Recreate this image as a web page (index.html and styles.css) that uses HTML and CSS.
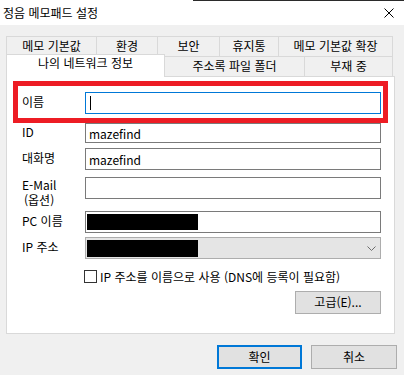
FILE: index.html
```html
<!DOCTYPE html>
<html lang="ko">
<head>
    <meta charset="UTF-8">
    <meta name="viewport" content="width=device-width, initial-scale=1.0">
    <title>정음 메모패드 설정</title>
    <link rel="stylesheet" href="styles.css">
</head>
<body>
    <div class="window">
        <div class="edge"></div>
        <div class="titlebar">
            <span class="title">정음 메모패드 설정</span>
            <svg class="close" width="10" height="10" viewBox="0 0 10 10">
                <path d="M0.5 0.5L9.5 9.5M9.5 0.5L0.5 9.5" stroke="#000" stroke-width="1" fill="none"/>
            </svg>
        </div>

        <div class="tabs">
            <div class="tab-row">
                <div class="tab" style="width: 91px;">메모 기본값</div>
                <div class="tab" style="width: 62px;">환경</div>
                <div class="tab" style="width: 63px;">보안</div>
                <div class="tab" style="width: 60px;">휴지통</div>
                <div class="tab" style="width: 115px;">메모 기본값 확장</div>
            </div>
            <div class="tab-row">
                <div class="tab active" style="width: 159px;">나의 네트워크 정보</div>
                <div class="tab" style="width: 141px;">주소록 파일 폴더</div>
                <div class="tab" style="width: 89px;">부재 중</div>
            </div>
        </div>

        <div class="panel">
            <div class="highlight">
                <div class="row">
                    <span class="label">이름</span>
                    <div class="textbox focused"><span class="caret"></span></div>
                </div>
            </div>

            <div class="row short">
                <span class="label">ID</span>
                <div class="textbox">mazefind</div>
            </div>

            <div class="row gap5">
                <span class="label">대화명</span>
                <div class="textbox">mazefind</div>
            </div>

            <div class="row gap7">
                <div class="label two-lines">
                    <div class="line">E-Mail</div>
                    <div class="line sub">(옵션)</div>
                </div>
                <div class="textbox"></div>
            </div>

            <div class="row gap12">
                <span class="label">PC 이름</span>
                <div class="textbox"><span class="redact"></span></div>
            </div>

            <div class="row gap4">
                <span class="label">IP 주소</span>
                <div class="combo">
                    <span class="redact tall"></span>
                    <svg class="chevron" width="9" height="5" viewBox="0 0 9 5">
                        <path d="M0.5 0.5L4.5 4.5L8.5 0.5" stroke="#6d6d6d" stroke-width="1" fill="none"/>
                    </svg>
                </div>
            </div>

            <div class="check-row">
                <span class="checkbox"></span>
                <span>IP 주소를 이름으로 사용 (DNS에 등록이 필요함)</span>
            </div>

            <div class="advanced-row">
                <div class="button advanced">고급(E)...</div>
            </div>
        </div>

        <div class="buttons">
            <div class="button default">확인</div>
            <div class="button">취소</div>
        </div>
    </div>
</body>
</html>
```

FILE: styles.css
```css
body {
    margin: 0;
    padding: 0;
    background: #f0f0f0;
    font-family: "Noto Sans CJK KR", sans-serif;
    font-size: 12px;
    color: #000;
}

.window {
    width: 404px;
    height: 375px;
    overflow: hidden;
}

.edge {
    height: 1px;
    background: linear-gradient(to right, #ffffff 193px, #2b2b2b 193px);
}

.titlebar {
    height: 24px;
    background: #fff;
    display: flex;
    align-items: center;
    justify-content: space-between;
    padding: 0 10px 0 3px;
}

.title {
    line-height: 16px;
}

/* tabs */
.tabs {
    margin: 11px 0 0 6px;
}

.tab-row {
    display: flex;
    height: 20px;
}

.tab {
    box-sizing: border-box;
    height: 20px;
    border: 1px solid #d9d9d9;
    border-bottom: none;
    margin-left: -1px;
    text-align: center;
    line-height: 17px;
    background: #f0f0f0;
    flex: none;
}

.tab:first-child {
    margin-left: 0;
}

.tab.active {
    position: relative;
    z-index: 1;
    height: 23px;
    margin-top: -2px;
    background: #fff;
    line-height: 16px;
}

/* panel */
.panel {
    margin: 0 9px 0 6px;
    height: 258px;
    box-sizing: border-box;
    border: 1px solid #d9d9d9;
    background: #fff;
    padding: 4px 6px 19px;
}

.highlight {
    border: 5px solid #ed1c24;
    padding: 6px 0 4px;
}

.row {
    display: flex;
    align-items: center;
    height: 22px;
    padding: 0 7px 0 9px;
}

.highlight .row {
    padding: 0 2px 0 4px;
}

.row.short {
    height: 20px;
}

.row.short .textbox {
    height: 20px;
    line-height: 17px;
}

.gap4 { margin-top: 4px; }
.gap5 { margin-top: 5px; }
.gap7 { margin-top: 7px; }
.gap12 { margin-top: 12px; }

.label {
    width: 63px;
    flex: none;
    line-height: 14px;
    margin-top: -2px;
}

.label.two-lines {
    align-self: flex-start;
    margin-top: 0;
}

.label .line {
    height: 15px;
    line-height: 15px;
}

.label .sub {
    padding-left: 2px;
}

.textbox {
    flex: 1;
    height: 22px;
    box-sizing: border-box;
    border: 1px solid #7a7a7a;
    background: #fff;
    padding: 0 3px;
    line-height: 19px;
    display: flex;
    align-items: center;
}

.textbox.focused {
    border-color: #0078d7;
}

.caret {
    width: 1px;
    height: 14px;
    background: #000;
    margin-left: 1px;
}

.redact {
    width: 111px;
    height: 16px;
    background: #000;
    margin-left: -2px;
}

.combo {
    flex: 1;
    height: 22px;
    box-sizing: border-box;
    border: 1px solid #adadad;
    background: #e5e5e5;
    display: flex;
    align-items: center;
    justify-content: space-between;
    padding: 0 4px 0 1px;
}

.redact.tall {
    height: 17px;
    margin-left: 0;
}

.check-row {
    display: flex;
    align-items: center;
    height: 13px;
    margin-top: 11px;
    padding-left: 71px;
    line-height: 14px;
}

.checkbox {
    width: 13px;
    height: 13px;
    box-sizing: border-box;
    border: 1px solid #333;
    background: #fff;
    margin-right: 3px;
    flex: none;
}

.advanced-row {
    display: flex;
    justify-content: flex-end;
    margin-top: 8px;
    padding-right: 7px;
}

.button {
    box-sizing: border-box;
    width: 86px;
    height: 24px;
    border: 1px solid #adadad;
    background: #e1e1e1;
    text-align: center;
    line-height: 21px;
}

.button.advanced {
    height: 23px;
    line-height: 20px;
}

.buttons {
    display: flex;
    justify-content: flex-end;
    gap: 9px;
    margin-top: 11px;
    padding-right: 7px;
}

.button.default {
    width: 85px;
    border: 2px solid #0078d7;
    line-height: 19px;
}
```
